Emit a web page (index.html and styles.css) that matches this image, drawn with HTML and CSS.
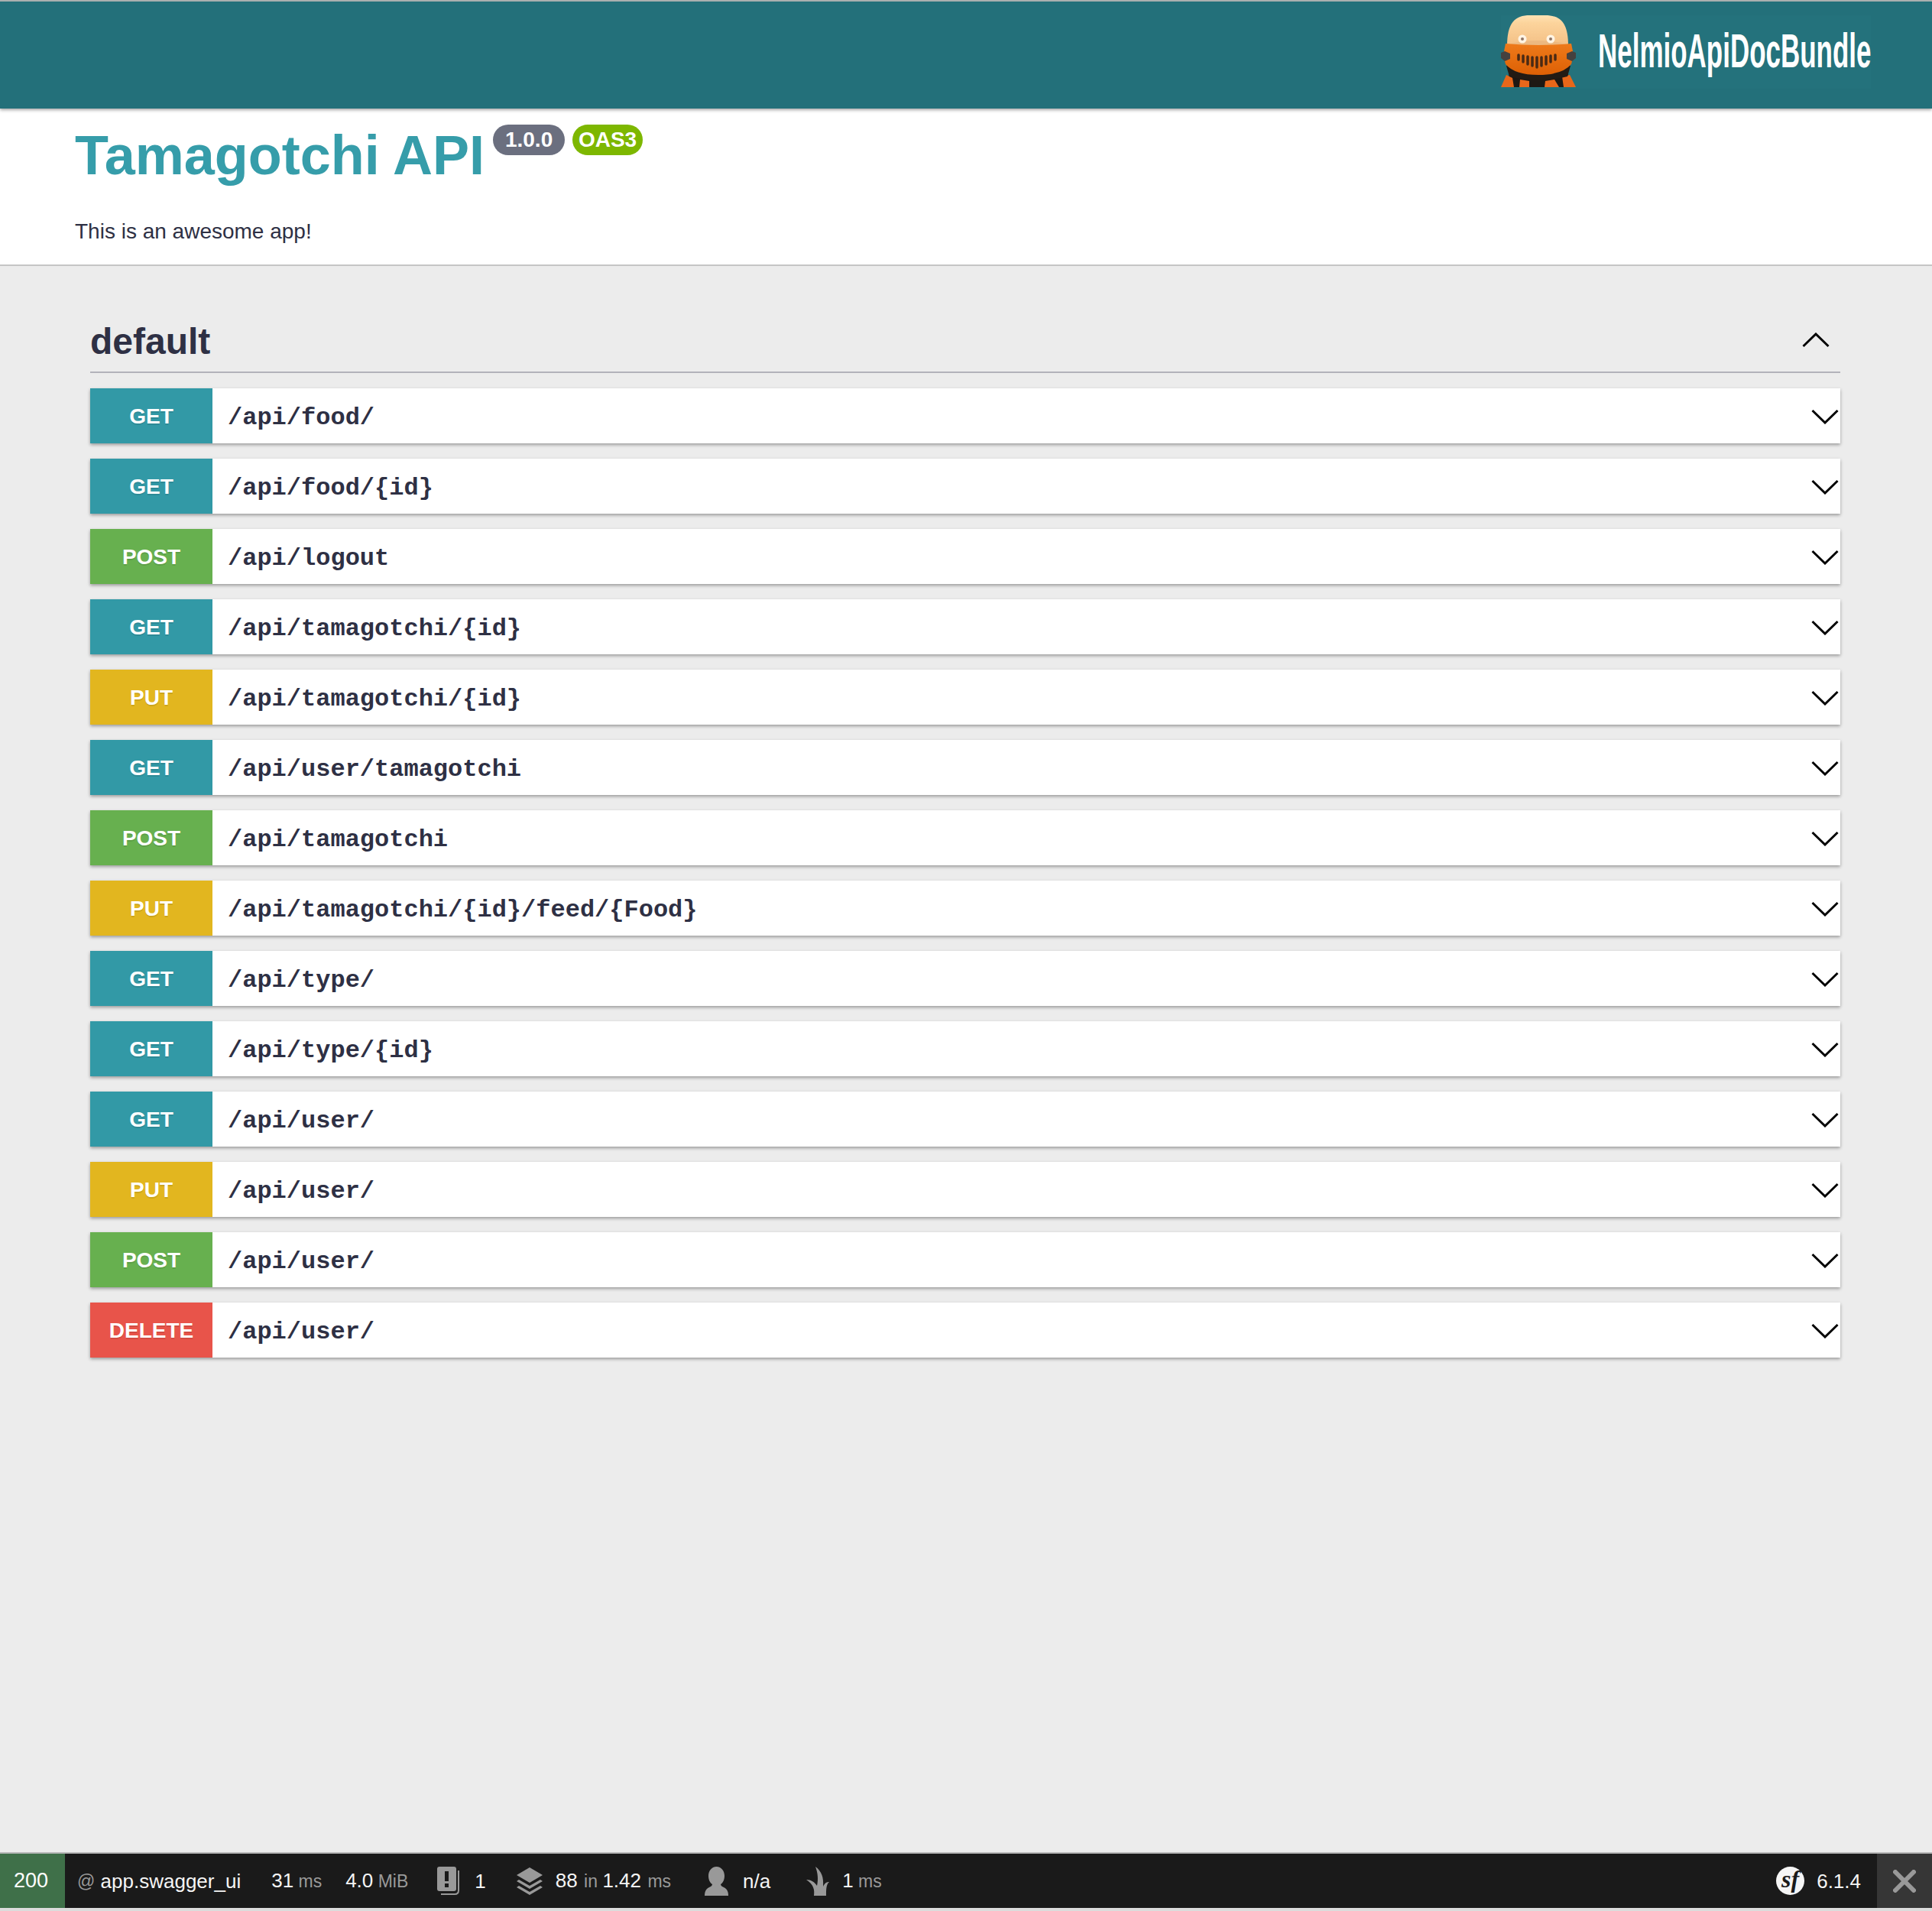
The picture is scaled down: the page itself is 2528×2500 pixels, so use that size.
FILE: index.html
```html
<!DOCTYPE html>
<html lang="en">
<head>
    <meta charset="UTF-8">
    <meta name="viewport" content="width=device-width, initial-scale=1.0">
    <link rel="stylesheet" href="styles.css">
    <title>Tamagotchi API</title>
</head>
<body>
    <header class="topbar">
        <div class="logo">
            <svg class="logo-mark" width="98" height="94" viewBox="0 0 98 94">
                <defs>
                    <linearGradient id="head" x1="0" y1="0" x2="0" y2="1">
                        <stop offset="0" stop-color="#ffe2b4"/>
                        <stop offset="0.25" stop-color="#fcd49c"/>
                        <stop offset="1" stop-color="#f3bf85"/>
                    </linearGradient>
                    <linearGradient id="suit" x1="0" y1="0" x2="0" y2="1">
                        <stop offset="0" stop-color="#ee7a1a"/>
                        <stop offset="1" stop-color="#dd6005"/>
                    </linearGradient>
                </defs>
                <path d="M8 94 L12 70 H86 L92 94 Z" fill="#1e1813"/>
                <path d="M0 94 L7 78 L15 82 L17 94 Z M24 94 L25 84 L37 86 L37 94 Z M57 94 L58 86 L70 84 L76 94 Z M82 94 L80 80 L90 78 L98 94 Z" fill="#e8671a"/>
                <path d="M7 66 H91 L87 80 Q49 90 11 80 Z" fill="#231b14"/>
                <path d="M8 40 C8 10 18 0 38 0 H58 C78 0 88 10 88 40 Z" fill="url(#head)"/>
                <path d="M10 38 Q49 28 86 38 L86 44 H10 Z" fill="#e2ac78" opacity="0.45"/>
                <path d="M6 37 Q49 41 92 37 L95 52 L92 64 Q80 78 49 78 Q18 78 6 64 L3 52 Z" fill="url(#suit)"/>
                <path d="M5 47 L0 49 L0 56 L5 60 L12 57 L12 50 Z M93 47 L98 49 L98 56 L93 60 L86 57 L86 50 Z" fill="#45413f"/>
                <circle cx="28" cy="31" r="5.5" fill="#fff4e4"/>
                <circle cx="28" cy="31" r="2" fill="#8f7466"/>
                <circle cx="65" cy="31" r="5.5" fill="#fff4e4"/>
                <circle cx="65" cy="31" r="2" fill="#8f7466"/>
                <g class="grille">
                    <line x1="23" y1="52" x2="23" y2="58"/>
                    <line x1="29" y1="53" x2="29" y2="61"/>
                    <line x1="35" y1="54" x2="35" y2="64"/>
                    <line x1="41" y1="55" x2="41" y2="66"/>
                    <line x1="47" y1="55" x2="47" y2="68"/>
                    <line x1="53" y1="55" x2="53" y2="66"/>
                    <line x1="59" y1="54" x2="59" y2="64"/>
                    <line x1="65" y1="53" x2="65" y2="61"/>
                    <line x1="71" y1="52" x2="71" y2="58"/>
                </g>
            </svg>
            <span class="logo-box"><span class="logo-text">NelmioApiDocBundle</span></span>
        </div>
    </header>

    <section class="info">
        <div class="title-row">
            <h1 class="title">Tamagotchi API</h1>
            <span class="pill pill-version">1.0.0</span>
            <span class="pill pill-oas">OAS3</span>
        </div>
        <p class="description">This is an awesome app!</p>
    </section>

    <main class="content">
        <div class="tag-head">
            <h2 class="tag-name">default</h2>
            <svg class="chevron-up" width="36" height="20" viewBox="0 0 36 20"><path d="M1.5 18 L18 2 L34.5 18"/></svg>
        </div>

        <div class="op"><span class="method get">GET</span><span class="path">/api/food/</span><svg class="chevron" width="36" height="20" viewBox="0 0 36 20"><path d="M1.5 2 L18 18 L34.5 2"/></svg></div>
        <div class="op"><span class="method get">GET</span><span class="path">/api/food/{id}</span><svg class="chevron" width="36" height="20" viewBox="0 0 36 20"><path d="M1.5 2 L18 18 L34.5 2"/></svg></div>
        <div class="op"><span class="method post">POST</span><span class="path">/api/logout</span><svg class="chevron" width="36" height="20" viewBox="0 0 36 20"><path d="M1.5 2 L18 18 L34.5 2"/></svg></div>
        <div class="op"><span class="method get">GET</span><span class="path">/api/tamagotchi/{id}</span><svg class="chevron" width="36" height="20" viewBox="0 0 36 20"><path d="M1.5 2 L18 18 L34.5 2"/></svg></div>
        <div class="op"><span class="method put">PUT</span><span class="path">/api/tamagotchi/{id}</span><svg class="chevron" width="36" height="20" viewBox="0 0 36 20"><path d="M1.5 2 L18 18 L34.5 2"/></svg></div>
        <div class="op"><span class="method get">GET</span><span class="path">/api/user/tamagotchi</span><svg class="chevron" width="36" height="20" viewBox="0 0 36 20"><path d="M1.5 2 L18 18 L34.5 2"/></svg></div>
        <div class="op"><span class="method post">POST</span><span class="path">/api/tamagotchi</span><svg class="chevron" width="36" height="20" viewBox="0 0 36 20"><path d="M1.5 2 L18 18 L34.5 2"/></svg></div>
        <div class="op"><span class="method put">PUT</span><span class="path">/api/tamagotchi/{id}/feed/{Food}</span><svg class="chevron" width="36" height="20" viewBox="0 0 36 20"><path d="M1.5 2 L18 18 L34.5 2"/></svg></div>
        <div class="op"><span class="method get">GET</span><span class="path">/api/type/</span><svg class="chevron" width="36" height="20" viewBox="0 0 36 20"><path d="M1.5 2 L18 18 L34.5 2"/></svg></div>
        <div class="op"><span class="method get">GET</span><span class="path">/api/type/{id}</span><svg class="chevron" width="36" height="20" viewBox="0 0 36 20"><path d="M1.5 2 L18 18 L34.5 2"/></svg></div>
        <div class="op"><span class="method get">GET</span><span class="path">/api/user/</span><svg class="chevron" width="36" height="20" viewBox="0 0 36 20"><path d="M1.5 2 L18 18 L34.5 2"/></svg></div>
        <div class="op"><span class="method put">PUT</span><span class="path">/api/user/</span><svg class="chevron" width="36" height="20" viewBox="0 0 36 20"><path d="M1.5 2 L18 18 L34.5 2"/></svg></div>
        <div class="op"><span class="method post">POST</span><span class="path">/api/user/</span><svg class="chevron" width="36" height="20" viewBox="0 0 36 20"><path d="M1.5 2 L18 18 L34.5 2"/></svg></div>
        <div class="op"><span class="method delete">DELETE</span><span class="path">/api/user/</span><svg class="chevron" width="36" height="20" viewBox="0 0 36 20"><path d="M1.5 2 L18 18 L34.5 2"/></svg></div>
    </main>

    <footer class="toolbar">
        <span class="status">200</span>
        <span class="bar-item route"><span class="at">@</span> app.swagger_ui</span>
        <span class="bar-item time"><span>31<span class="dim"> ms</span></span></span>
        <span class="bar-item memory"><span>4.0<span class="dim"> MiB</span></span></span>
        <span class="bar-item logs">
            <svg width="31" height="38" viewBox="0 0 31 38">
                <rect x="0" y="0" width="25" height="32" rx="3" fill="#999"/>
                <path d="M28 5 V31 Q28 36 23 36 H5" fill="none" stroke="#999" stroke-width="2"/>
                <rect x="10" y="6" width="5" height="13" fill="#1a1a1a"/>
                <rect x="10" y="22" width="5" height="5" fill="#1a1a1a"/>
            </svg>
            <span class="log-count">1</span>
        </span>
        <span class="bar-item queries">
            <svg width="36" height="38" viewBox="0 0 36 38">
                <path d="M18 1 L35 11 L18 21 L1 11 Z" fill="#999"/>
                <path d="M1 19 L4 17 L18 25 L32 17 L35 19 L18 29 Z" fill="#999"/>
                <path d="M1 27 L4 25 L18 33 L32 25 L35 27 L18 37 Z" fill="#999"/>
            </svg>
            <span class="query-text">88<span class="dim"> in </span>1.42<span class="dim"> ms</span></span>
        </span>
        <span class="bar-item user">
            <svg width="31" height="38" viewBox="0 0 31 38">
                <path d="M15.5 0 C22 0 26 6 26 12 C26 17 24 21 21 23 C21 25 23 26 25 27 C29 29 31 32 31 38 H0 C0 32 2 29 6 27 C8 26 10 25 10 23 C7 21 5 17 5 12 C5 6 9 0 15.5 0 Z" fill="#999"/>
            </svg>
            <span class="user-name">n/a</span>
        </span>
        <span class="bar-item twig">
            <svg width="30" height="38" viewBox="0 0 30 38">
                <path d="M12 0 C20 6 23 14 22 26 C24 22 26 20 30 20 C26 23 26 30 26 38 H10 C11 30 10 24 0 17 C6 17 11 20 14 25 C16 16 15 8 12 0 Z" fill="#999"/>
            </svg>
            <span class="twig-text">1<span class="dim"> ms</span></span>
        </span>
        <span class="bar-item version">
            <span class="sf-badge">sf</span>
            <span class="version-number">6.1.4</span>
        </span>
        <span class="close">
            <svg width="30" height="30" viewBox="0 0 30 30"><path d="M3 3 L27 27 M27 3 L3 27"/></svg>
        </span>
    </footer>
</body>
</html>
```

FILE: styles.css
```css
*{
    box-sizing: border-box;
}
html, body{
    margin: 0;
    padding: 0;
}
body{
    display: flex;
    flex-direction: column;
    min-height: 2500px;
    background: rgb(236, 236, 236);
    color: rgb(46, 48, 68);
    font-family: "Liberation Sans", Arial, sans-serif;
}

/* top bar */
.topbar{
    height: 142px;
    border-top: 2px solid rgb(170, 175, 175);
    background: rgb(35, 112, 122);
    box-shadow: 0 2px 4px rgba(0, 0, 0, 0.35);
    display: flex;
    justify-content: flex-end;
    position: relative;
}
.logo{
    display: flex;
    align-items: flex-start;
    height: 96px;
    margin: 18px 80px 0 0;
    background: rgb(36, 114, 124);
}
.logo-box{
    display: block;
    width: 357px;
    height: 96px;
    margin-left: 29px;
}
.logo-text{
    display: block;
    width: 357px;
    transform: scaleX(0.555);
    transform-origin: left top;
    color: #fff;
    font-size: 63px;
    font-weight: bold;
    line-height: 96px;
    margin-top: -2px;
    white-space: nowrap;
}

/* title block */
.info{
    height: 206px;
    padding: 0 0 0 98px;
    background: #fff;
    border-bottom: 2px solid rgb(197, 197, 197);
}
.title-row{
    display: flex;
    align-items: flex-start;
    padding-top: 20px;
}
.title{
    margin: 0;
    font-size: 72px;
    line-height: 83px;
    font-weight: bold;
    color: rgb(54, 157, 170);
}
.pill{
    height: 40px;
    line-height: 40px;
    border-radius: 20px;
    margin-top: 1px;
    color: #fff;
    font-size: 28px;
    font-weight: bold;
    text-align: center;
}
.pill-version{
    width: 94px;
    margin-left: 11px;
    background: rgb(107, 111, 127);
}
.pill-oas{
    width: 92px;
    margin-left: 10px;
    background: rgb(125, 183, 0);
}
.description{
    margin: 0;
    padding-top: 41px;
    font-size: 28px;
    line-height: 34px;
    color: rgb(46, 48, 68);
}

/* operations */
.content{
    padding: 0 120px 0 118px;
    flex: 1;
}
.tag-head{
    height: 140px;
    display: flex;
    justify-content: space-between;
    align-items: flex-start;
    border-bottom: 2px solid rgb(178, 178, 186);
    margin-bottom: 20px;
}
.tag-name{
    margin: 0;
    padding-top: 71px;
    font-size: 48px;
    line-height: 55px;
    font-weight: bold;
}
.chevron-up{
    margin: 87px 14px 0 0;
}
.chevron-up path, .chevron path{
    fill: none;
    stroke: #000;
    stroke-width: 3;
}
.op{
    display: flex;
    align-items: center;
    height: 72px;
    margin-bottom: 20px;
    background: #fff;
    box-shadow: 0 2px 4px rgba(0, 0, 0, 0.35);
}
.method{
    width: 160px;
    height: 72px;
    line-height: 74px;
    text-align: center;
    color: #fff;
    font-size: 28px;
    font-weight: bold;
    text-shadow: 0 2px 0 rgba(0, 0, 0, 0.1);
}
.get{
    background: rgb(50, 153, 166);
}
.post{
    background: rgb(103, 176, 79);
}
.put{
    background: rgb(226, 182, 31);
}
.delete{
    background: rgb(232, 84, 74);
}
.path{
    flex: 1;
    padding: 6px 0 0 20px;
    font-family: "Liberation Mono", "Courier New", monospace;
    font-size: 32px;
    font-weight: bold;
    line-height: 66px;
}
.chevron{
    margin: 2px 2px 0 0;
}

/* debug toolbar */
.toolbar{
    height: 77px;
    display: flex;
    align-items: center;
    background: rgb(26, 26, 26);
    border-top: 2px solid rgb(184, 184, 184);
    border-bottom: 4px solid rgb(220, 220, 220);
    color: #f5f5f5;
    font-size: 26px;
    line-height: 30px;
}
.status{
    width: 85px;
    height: 71px;
    line-height: 71px;
    padding-left: 18px;
    background: rgb(63, 112, 73);
    color: #fff;
    font-size: 27px;
    flex: none;
}
.bar-item{
    display: flex;
    align-items: center;
    white-space: pre;
}
.dim{
    color: #999;
    font-size: 23px;
}
.query-text .dim{
    margin-left: 2px;
}
.at{
    color: #999;
    font-size: 23px;
}
.route{
    margin-left: 16px;
}
.time{
    margin-left: 40px;
}
.memory{
    margin-left: 31px;
}
.logs{
    margin-left: 38px;
    gap: 18px;
}
.queries{
    margin-left: 39px;
    gap: 16px;
}
.user{
    margin-left: 44px;
    gap: 19px;
}
.twig{
    margin-left: 47px;
    gap: 17px;
}
.version{
    margin-left: auto;
    gap: 16px;
    padding-right: 21px;
}
.sf-badge{
    width: 37px;
    height: 37px;
    border-radius: 50%;
    background: #f5f5f5;
    color: #1a1a1a;
    text-align: center;
    font-family: "Liberation Serif", serif;
    font-style: italic;
    font-weight: bold;
    font-size: 32px;
    line-height: 33px;
}
.close{
    width: 72px;
    height: 71px;
    background: rgb(54, 54, 54);
    display: flex;
    align-items: center;
    justify-content: center;
}
.close path{
    fill: none;
    stroke: #999;
    stroke-width: 6;
    stroke-linecap: round;
}
.grille line{
    stroke: #4a2a14;
    stroke-width: 3.5;
    stroke-linecap: round;
}
```
